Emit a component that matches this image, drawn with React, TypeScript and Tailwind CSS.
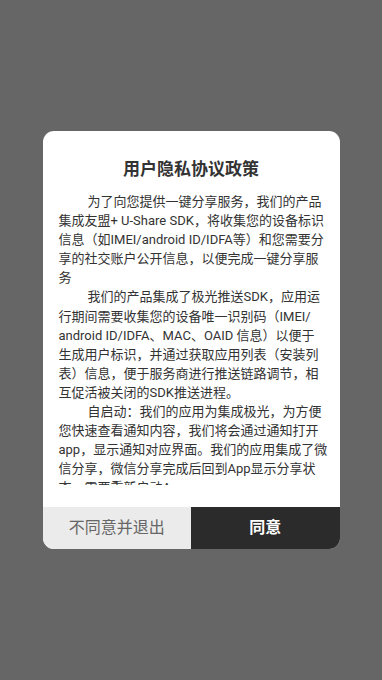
import React from "react";

const font = { fontFamily: "Roboto, 'Noto Sans CJK SC', sans-serif" };

export default function App() {
  return (
    <div
      className="w-[382px] h-[680px] bg-[#666666] flex items-center justify-center"
      style={font}
    >
      <div className="w-[297px] h-[418px] bg-white rounded-[11px] overflow-hidden flex flex-col">
        <div className="pt-[26px] h-[50px] text-center text-[17px] leading-[24px] font-bold text-[#333333]">
          用户隐私协议政策
        </div>
        <div className="mt-[11px] h-[293px] overflow-hidden px-[16px] text-[13px] leading-[19.1px] text-[#333333] whitespace-nowrap">
          <p className="indent-[29px]">
            为了向您提供一键分享服务，我们的产品
            <br />
            集成友盟+ U-Share SDK，将收集您的设备标识
            <br />
            信息（如IMEI/android ID/IDFA等）和您需要分
            <br />
            享的社交账户公开信息，以便完成一键分享服
            <br />
            务
          </p>
          <p className="indent-[29px]">
            我们的产品集成了极光推送SDK，应用运
            <br />
            行期间需要收集您的设备唯一识别码（IMEI/
            <br />
            android ID/IDFA、MAC、OAID 信息）以便于
            <br />
            生成用户标识，并通过获取应用列表（安装列
            <br />
            表）信息，便于服务商进行推送链路调节，相
            <br />
            互促活被关闭的SDK推送进程。
          </p>
          <p className="indent-[29px]">
            自启动：我们的应用为集成极光，为方便
            <br />
            您快速查看通知内容，我们将会通过通知打开
            <br />
            app，显示通知对应界面。我们的应用集成了微
            <br />
            信分享，微信分享完成后回到App显示分享状
            <br />
            态，需要重新启动App。
          </p>
        </div>
        <div className="flex-1" />
        <div className="flex h-[42px]">
          <div className="flex-1 bg-[#ebebeb] flex items-center justify-center text-[16px] text-[#666666]">
            不同意并退出
          </div>
          <div className="flex-1 bg-[#2b2b2b] flex items-center justify-center text-[16px] font-bold text-white">
            同意
          </div>
        </div>
      </div>
    </div>
  );
}
